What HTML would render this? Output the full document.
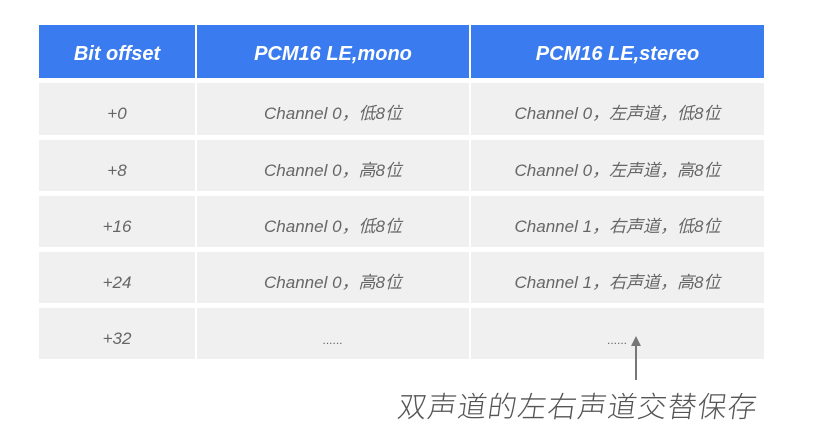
<!DOCTYPE html>
<html><head><meta charset="utf-8"><style>
body{margin:0;width:830px;height:440px;background:#fff;position:relative;overflow:hidden;font-family:"Liberation Sans","Noto Sans CJK SC",sans-serif}
.c{position:absolute;display:flex;align-items:center;justify-content:center;font-style:italic;box-sizing:border-box;line-height:20px}
.h{background:#3a7cf0;color:#fff;font-weight:bold;font-size:20px;padding-top:5px}
.r{background:#f0f0f0;color:#666;font-size:17px;padding-top:10px}
</style></head><body>
<div class="c h" style="left:39px;top:25px;width:156px;height:53px">Bit offset</div>
<div class="c h" style="left:197px;top:25px;width:272px;height:53px">PCM16 LE,mono</div>
<div class="c h" style="left:471px;top:25px;width:293px;height:53px">PCM16 LE,stereo</div>

<div class="c r" style="left:39px;top:83px;width:156px;height:52px">+0</div>
<div class="c r" style="left:197px;top:83px;width:272px;height:52px">Channel 0，低8位</div>
<div class="c r" style="left:471px;top:83px;width:293px;height:52px">Channel 0，左声道，低8位</div>

<div class="c r" style="left:39px;top:140px;width:156px;height:51px">+8</div>
<div class="c r" style="left:197px;top:140px;width:272px;height:51px">Channel 0，高8位</div>
<div class="c r" style="left:471px;top:140px;width:293px;height:51px">Channel 0，左声道，高8位</div>

<div class="c r" style="left:39px;top:196px;width:156px;height:51px">+16</div>
<div class="c r" style="left:197px;top:196px;width:272px;height:51px">Channel 0，低8位</div>
<div class="c r" style="left:471px;top:196px;width:293px;height:51px">Channel 1，右声道，低8位</div>

<div class="c r" style="left:39px;top:252px;width:156px;height:51px">+24</div>
<div class="c r" style="left:197px;top:252px;width:272px;height:51px">Channel 0，高8位</div>
<div class="c r" style="left:471px;top:252px;width:293px;height:51px">Channel 1，右声道，高8位</div>

<div class="c r" style="left:39px;top:308px;width:156px;height:51px">+32</div>
<div class="c r" style="left:197px;top:308px;width:272px;height:51px;font-size:12px;padding-top:12px">......</div>
<div class="c r" style="left:471px;top:308px;width:293px;height:51px;font-size:12px;padding-top:12px">......</div>

<svg style="position:absolute;left:0;top:0" width="830" height="440">
<line x1="636" y1="343" x2="636" y2="380" stroke="#777" stroke-width="2"/>
<polygon points="636,336 631,346 641,346" fill="#777"/>
</svg>
<div style="position:absolute;left:398px;top:384px;font-size:29px;color:#555;font-family:'Noto Sans CJK SC',sans-serif;font-weight:300;letter-spacing:1px;transform:skewX(-8deg)">双声道的左右声道交替保存</div>
</body></html>
